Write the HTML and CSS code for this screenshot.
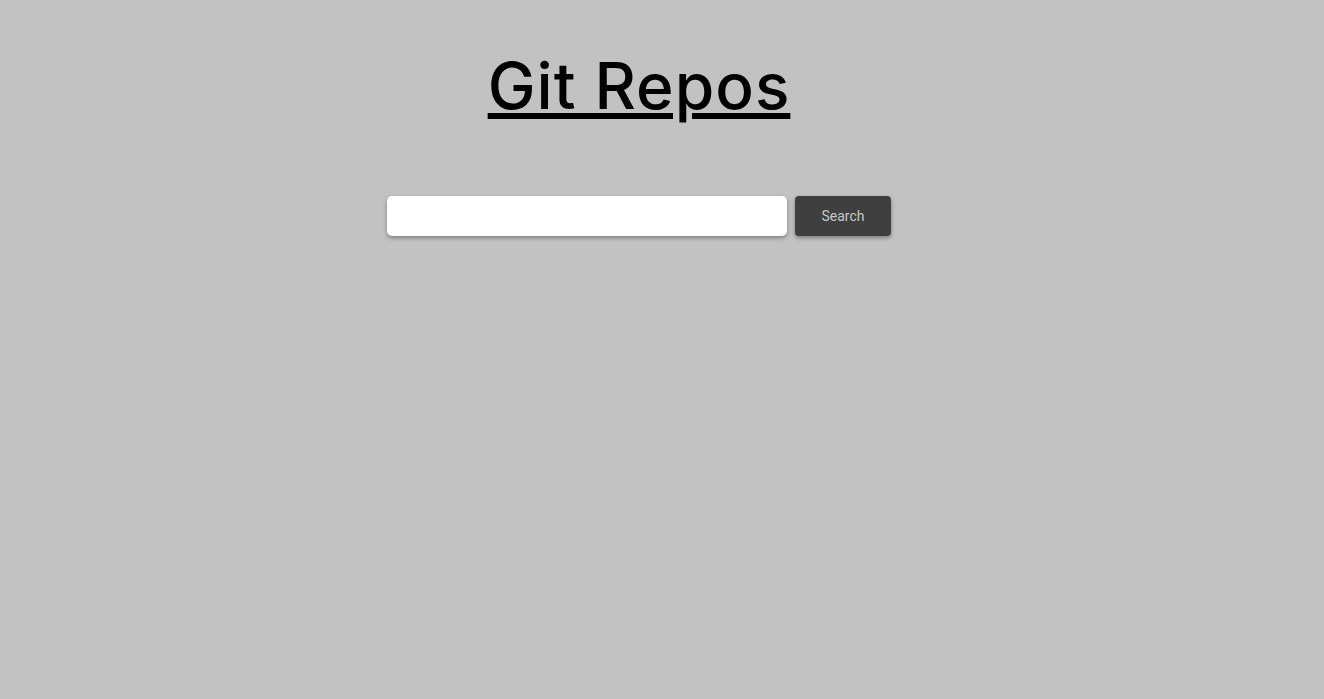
FILE: index.html
```html
<!DOCTYPE html>
<html>
<head>
<meta charset="utf-8">
<link rel="stylesheet" href="styles.css">
</head>
<body>
<main class="page">
  <h1 class="title">Git Repos</h1>
  <form class="search">
    <input class="search-input" type="text">
    <button class="search-btn" type="button">Search</button>
  </form>
</main>
</body>
</html>
```
FILE: styles.css
```css
html, body {
  margin: 0;
  padding: 0;
  background: #c2c2c2;
  height: 100%;
}
.page {
  width: 1278px;
  display: flex;
  flex-direction: column;
  align-items: center;
  padding-top: 44px;
}
.title {
  margin: 0;
  font-family: Inter, sans-serif;
  font-weight: 500;
  font-size: 64px;
  letter-spacing: 1px;
  line-height: 84px;
  color: #000;
  text-decoration: underline;
  text-decoration-thickness: 6px;
  text-underline-offset: 4px;
}
.search {
  display: flex;
  gap: 8px;
  margin-top: 68px;
}
.search-input {
  width: 400px;
  height: 40px;
  box-sizing: border-box;
  border: none;
  border-radius: 5px;
  background: #fff;
  box-shadow: 0 2px 4px rgba(0,0,0,0.35);
  outline: none;
  padding: 0 10px;
}
.search-btn {
  width: 96px;
  height: 40px;
  border: none;
  border-radius: 4px;
  background: #3f3f3f;
  color: #c8c8c8;
  font-family: Roboto, sans-serif;
  font-size: 14px;
  box-shadow: 0 2px 4px rgba(0,0,0,0.35);
}
```
